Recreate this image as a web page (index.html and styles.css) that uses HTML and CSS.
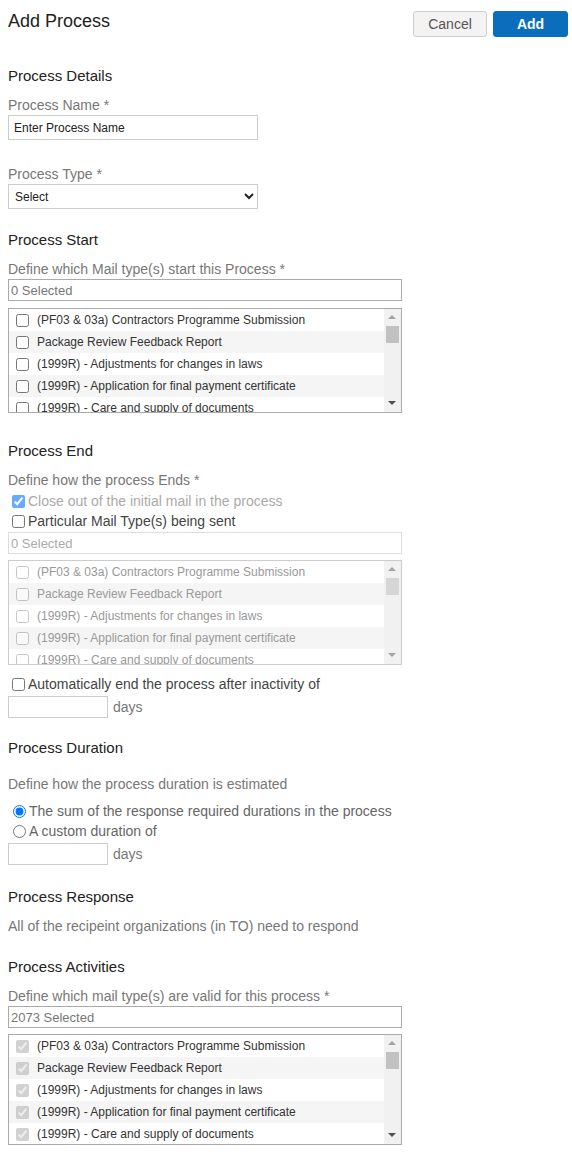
FILE: index.html
```html
<!DOCTYPE html>
<html lang="en">
<head>
<meta charset="utf-8">
<title>Add Process</title>
<link rel="stylesheet" href="styles.css">
</head>
<body>
<div class="page">
  <header class="top">
    <h1 class="title">Add Process</h1>
    <div class="actions">
      <button class="btn btn-cancel">Cancel</button>
      <button class="btn btn-add">Add</button>
    </div>
  </header>

  <section class="sec s-details">
    <h2 class="sec-title">Process Details</h2>
    <div class="lbl">Process Name *</div>
    <input class="txt" type="text" value="Enter Process Name">
    <div class="lbl lbl-type">Process Type *</div>
    <select class="sel"><option>Select</option></select>
  </section>

  <section class="sec s-start">
    <h2 class="sec-title">Process Start</h2>
    <div class="lbl">Define which Mail type(s) start this Process *</div>
    <input class="count" type="text" value="0 Selected" readonly>
    <div class="list">
      <div class="items">
        <label class="item"><input type="checkbox"><span>(PF03 &amp; 03a) Contractors Programme Submission</span></label>
        <label class="item alt"><input type="checkbox"><span>Package Review Feedback Report</span></label>
        <label class="item"><input type="checkbox"><span>(1999R) - Adjustments for changes in laws</span></label>
        <label class="item alt"><input type="checkbox"><span>(1999R) - Application for final payment certificate</span></label>
        <label class="item"><input type="checkbox"><span>(1999R) - Care and supply of documents</span></label>
      </div>
      <div class="sbar"><span class="arr up"></span><span class="thumb"></span><span class="track"></span><span class="arr down"></span></div>
    </div>
  </section>

  <section class="sec s-end">
    <h2 class="sec-title">Process End</h2>
    <div class="lbl">Define how the process Ends *</div>
    <label class="opt opt-off"><input type="checkbox" class="faded" checked>Close out of the initial mail in the process</label>
    <label class="opt"><input type="checkbox">Particular Mail Type(s) being sent</label>
    <input class="count count-off" type="text" value="0 Selected" disabled>
    <div class="list list-off">
      <div class="items">
        <label class="item"><input type="checkbox" class="muted" tabindex="-1"><span>(PF03 &amp; 03a) Contractors Programme Submission</span></label>
        <label class="item alt"><input type="checkbox" class="muted" tabindex="-1"><span>Package Review Feedback Report</span></label>
        <label class="item"><input type="checkbox" class="muted" tabindex="-1"><span>(1999R) - Adjustments for changes in laws</span></label>
        <label class="item alt"><input type="checkbox" class="muted" tabindex="-1"><span>(1999R) - Application for final payment certificate</span></label>
        <label class="item"><input type="checkbox" class="muted" tabindex="-1"><span>(1999R) - Care and supply of documents</span></label>
      </div>
      <div class="sbar"><span class="arr up"></span><span class="thumb"></span><span class="track"></span><span class="arr down"></span></div>
    </div>
    <label class="opt opt-auto"><input type="checkbox">Automatically end the process after inactivity of</label>
    <div class="days"><input class="num" type="text"><span class="unit">days</span></div>
  </section>

  <section class="sec s-duration">
    <h2 class="sec-title">Process Duration</h2>
    <div class="lbl lbl-dur">Define how the process duration is estimated</div>
    <label class="opt opt-radio opt-first"><input type="radio" name="dur" checked>The sum of the response required durations in the process</label>
    <label class="opt opt-radio"><input type="radio" name="dur">A custom duration of</label>
    <div class="days"><input class="num" type="text"><span class="unit">days</span></div>
  </section>

  <section class="sec s-response">
    <h2 class="sec-title">Process Response</h2>
    <div class="lbl">All of the recipeint organizations (in TO) need to respond</div>
  </section>

  <section class="sec s-activities">
    <h2 class="sec-title">Process Activities</h2>
    <div class="lbl">Define which mail type(s) are valid for this process *</div>
    <input class="count" type="text" value="2073 Selected" readonly>
    <div class="list list-tall">
      <div class="items">
        <label class="item"><input type="checkbox" checked disabled><span>(PF03 &amp; 03a) Contractors Programme Submission</span></label>
        <label class="item alt"><input type="checkbox" checked disabled><span>Package Review Feedback Report</span></label>
        <label class="item"><input type="checkbox" checked disabled><span>(1999R) - Adjustments for changes in laws</span></label>
        <label class="item alt"><input type="checkbox" checked disabled><span>(1999R) - Application for final payment certificate</span></label>
        <label class="item"><input type="checkbox" checked disabled><span>(1999R) - Care and supply of documents</span></label>
      </div>
      <div class="sbar"><span class="arr up"></span><span class="thumb"></span><span class="track"></span><span class="arr down"></span></div>
    </div>
  </section>
</div>
</body>
</html>
```

FILE: styles.css
```css
* { box-sizing: border-box; }
html, body { margin: 0; padding: 0; background: #fff; }
body {
  font-family: "Liberation Sans", Arial, sans-serif;
  color: #333;
  width: 572px;
}
.page { padding: 0 4px 0 8px; }

.top {
  display: flex;
  justify-content: space-between;
  align-items: flex-start;
  padding-top: 11px;
}
.title {
  margin: 0;
  font-size: 18px;
  line-height: 20px;
  font-weight: normal;
  color: #222;
}
.actions { display: flex; gap: 6px; }
.btn {
  height: 26px;
  font-family: inherit;
  font-size: 14px;
  border-radius: 3px;
  padding: 0;
  cursor: pointer;
}
.btn-cancel {
  width: 74px;
  background: #f3f3f3;
  border: 1px solid #cdcdcd;
  color: #555;
}
.btn-add {
  width: 75px;
  background: #0a6ebd;
  border: 1px solid #0a6ebd;
  color: #fff;
  font-weight: bold;
}

.sec { display: flex; flex-direction: column; align-items: flex-start; }
.sec-title {
  margin: 0;
  font-size: 15px;
  line-height: 18px;
  font-weight: normal;
  color: #222;
}
.s-details { margin-top: 30px; }
.s-start { margin-top: 22px; }
.s-end { margin-top: 29px; }
.s-duration { margin-top: 21px; }
.s-response { margin-top: 23px; }
.s-activities { margin-top: 24px; }

.lbl {
  margin-top: 12px;
  font-size: 14px;
  line-height: 16px;
  color: #777;
}
.lbl-type { margin-top: 26px; }
.lbl-dur { margin-top: 19px; }

.txt, .sel {
  margin-top: 2px;
  width: 250px;
  height: 25px;
  border: 1px solid #ccc;
  border-radius: 0;
  font-family: inherit;
  font-size: 12px;
  color: #222;
  background: #fff;
}
.txt { padding: 0 5px; }
.sel { padding: 0 2px; outline: none; }

.count {
  margin-top: 2px;
  width: 394px;
  height: 22px;
  border: 1px solid #aaa;
  padding: 0 2px;
  font-family: inherit;
  font-size: 13px;
  color: #777;
  background: #fff;
  outline: none;
}
.count-off { margin-top: 1px; border-color: #ddd; color: #aaa; }

.list {
  margin-top: 7px;
  width: 394px;
  height: 105px;
  border: 1px solid #aaa;
  display: flex;
  overflow: hidden;
}
.list-off { margin-top: 6px; border-color: #ccc; }
.list-tall { margin-top: 6px; height: 111px; }
.items { flex: 1; min-width: 0; overflow: hidden; }
.item {
  display: flex;
  align-items: center;
  height: 22px;
  padding-left: 7px;
  font-size: 12px;
  color: #333;
  white-space: nowrap;
}
.item.alt { background: #f5f5f5; }
.item input { margin: 0 8px 0 0; width: 13px; height: 13px; flex: none; }
.list-off .item { color: #999; }
.muted { opacity: 0.4; pointer-events: none; }

.sbar {
  width: 17px;
  flex: none;
  background: #f1f1f1;
  display: flex;
  flex-direction: column;
}
.arr { height: 17px; flex: none; position: relative; }
.arr::after {
  content: "";
  position: absolute;
  left: 4px;
  width: 0;
  height: 0;
  border-left: 4px solid transparent;
  border-right: 4px solid transparent;
}
.arr.up::after { top: 6px; border-bottom: 4px solid #a3a3a3; }
.arr.down::after { top: 6px; border-top: 4px solid #505050; }
.thumb { height: 17px; margin: 0 2px; background: #c1c1c1; flex: none; }
.track { flex: 1; }
.list-off .arr.down::after { border-top-color: #a3a3a3; }
.list-off .thumb { background: #d6d6d6; }

.opt {
  display: flex;
  align-items: center;
  height: 20px;
  font-size: 14px;
  color: #444;
}
.opt input { margin: 0 3px 0 4px; width: 13px; height: 13px; }
.opt-off { margin-top: 3px; color: #aaa; }
.faded { opacity: 0.6; }
.opt-auto { margin-top: 9px; }
.opt-radio { color: #666; }
.opt-radio input { margin: 0 3px 0 5px; }
.opt-first { margin-top: 9px; }

.days { display: flex; align-items: center; margin-top: 2px; }
.num {
  width: 100px;
  height: 22px;
  border: 1px solid #ccc;
  background: #fff;
  font-family: inherit;
  font-size: 13px;
}
.unit { margin-left: 5px; font-size: 14px; color: #777; }
```
